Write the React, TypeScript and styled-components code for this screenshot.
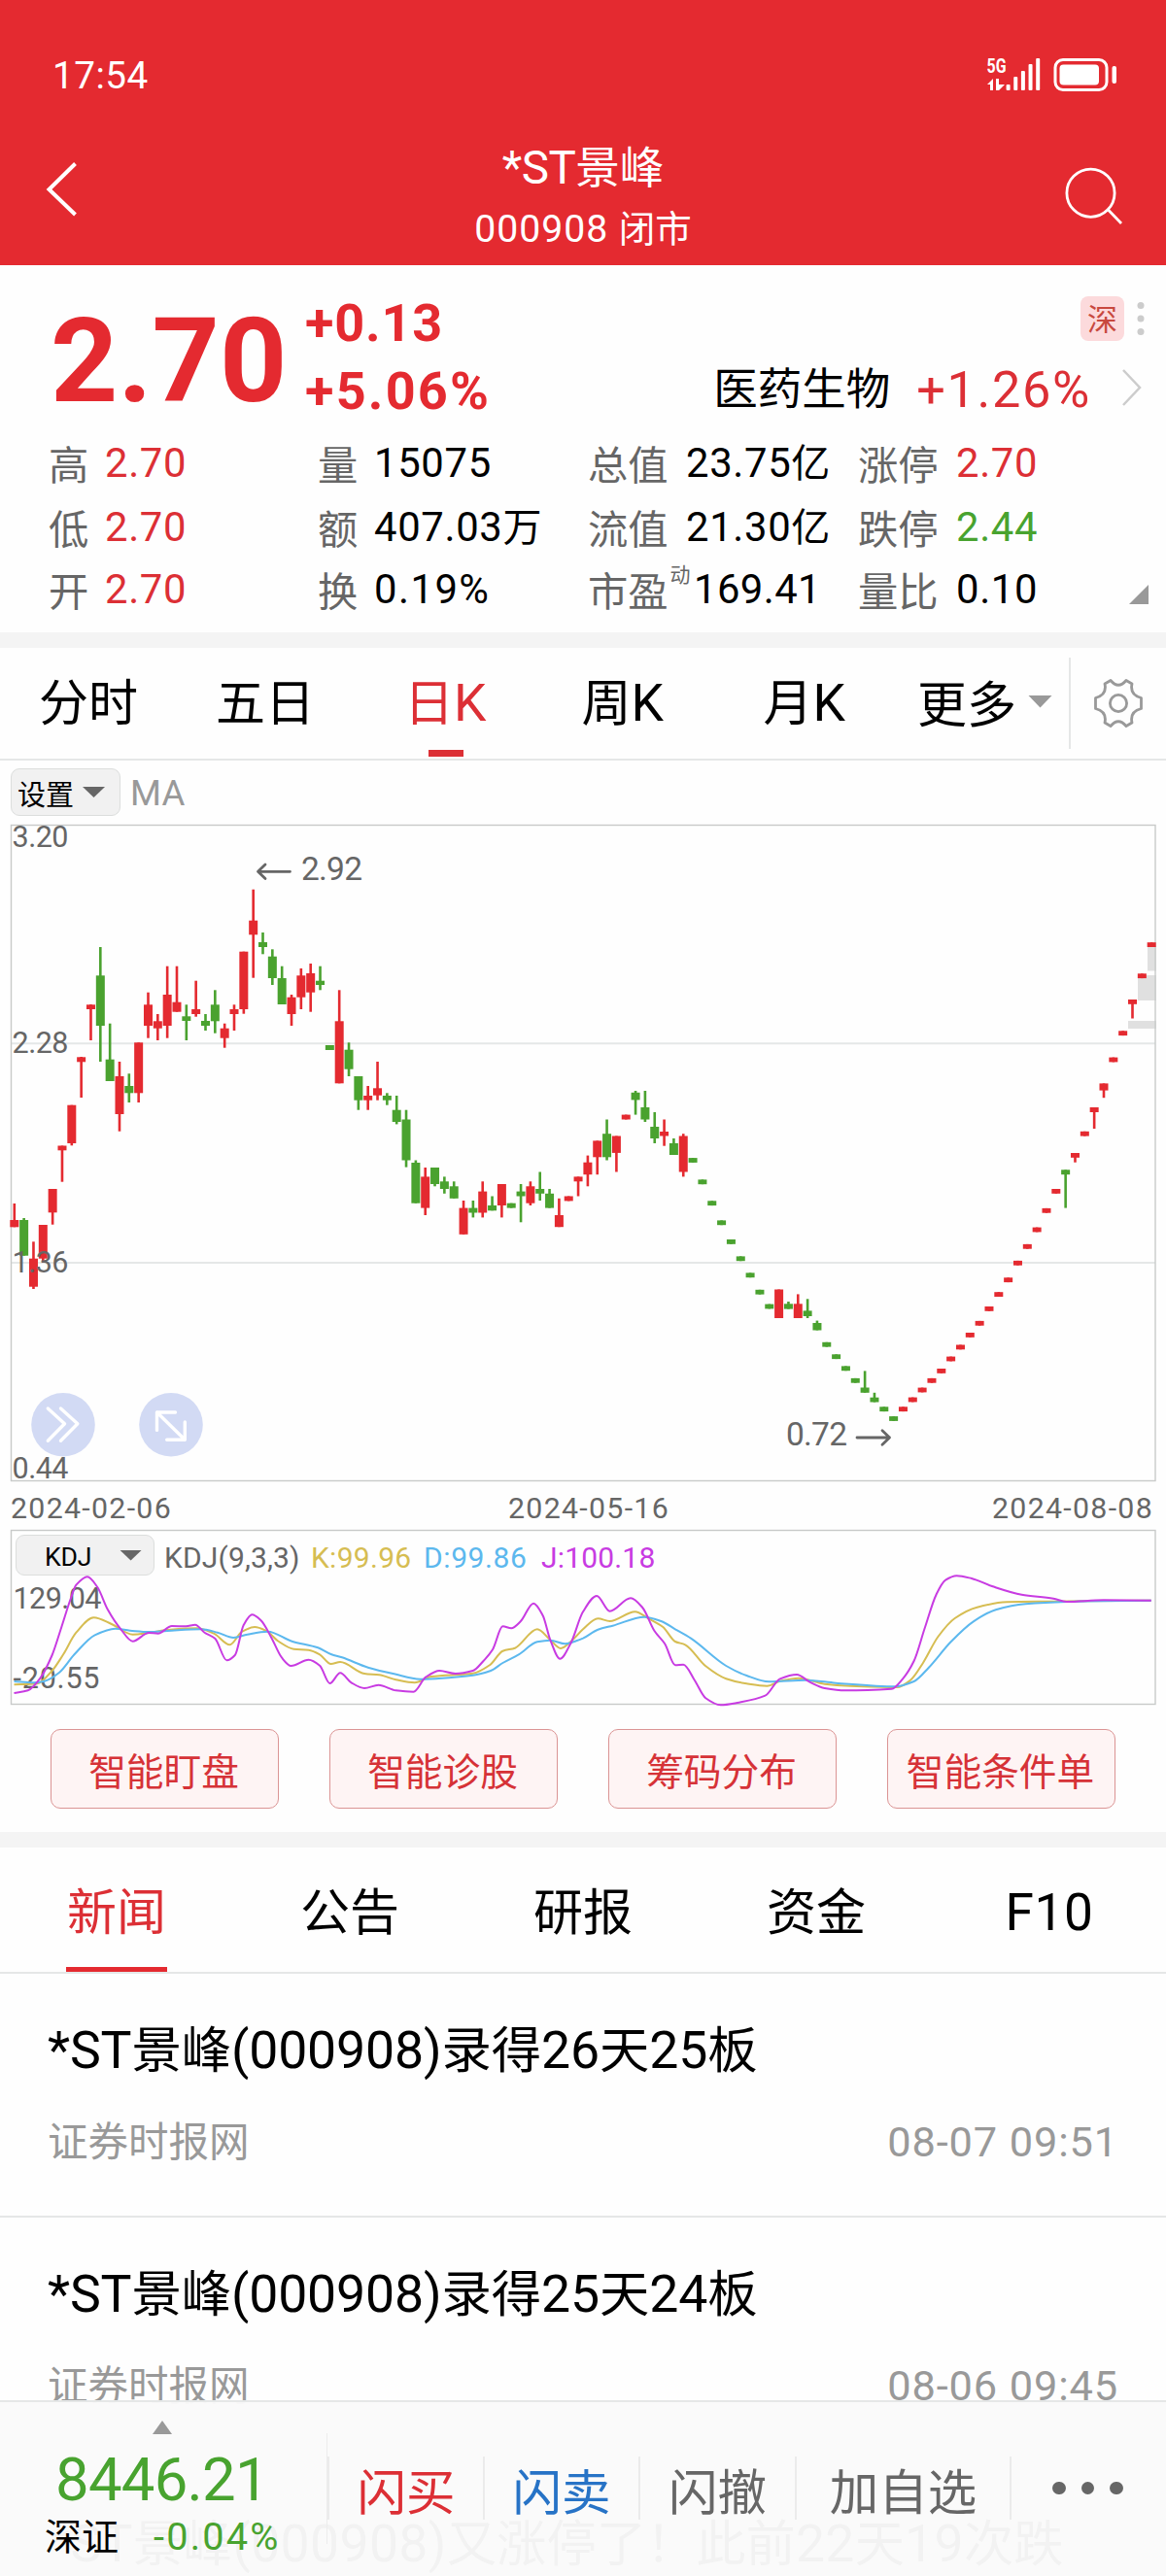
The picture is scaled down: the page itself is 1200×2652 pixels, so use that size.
import React from 'react';
import styled, { createGlobalStyle, css } from 'styled-components';

const RED = '#e42a30';
const TEXT_RED = '#dc2f35';
const GREEN = '#48a32f';
const GREY = '#666666';
const LINE = '#e5e7e7';

const GlobalStyle = createGlobalStyle`
  * { box-sizing: border-box; }
  html, body { margin: 0; padding: 0; background: #fefefe; }
  body { font-family: 'Noto Sans CJK SC', sans-serif; color: #000; }
`;

/* ---------- text ---------- */

const Latin = styled.span<{ $track: number }>`
  font-family: Roboto, 'Noto Sans CJK SC', sans-serif;
  font-size: 1.045em;
  line-height: 0;
  letter-spacing: ${(p) => p.$track}em;
`;

/* Digits and latin letters are set in a slightly larger face than the hanzi. */
function Txt({ children, track = 0.01 }: { children: string; track?: number }) {
  const runs = children.match(/[\x20-\x7e]+|[^\x20-\x7e]+/g) ?? [];
  return (
    <>
      {runs.map((r, i) =>
        /[\x20-\x7e]/.test(r) ? (
          <Latin key={i} $track={track}>
            {r}
          </Latin>
        ) : (
          <React.Fragment key={i}>{r}</React.Fragment>
        ),
      )}
    </>
  );
}

/* ---------- page ---------- */

const Page = styled.main`
  position: relative;
  width: 1200px;
  height: 2652px;
  overflow: hidden;
  display: flex;
  flex-direction: column;
  background: #fefefe;
`;

const Divider = styled.div`
  height: 16px;
  flex: none;
  background: #f4f4f4;
`;

const Triangle = styled.i<{ $w: number; $h: number; $color: string; $up?: boolean }>`
  display: block;
  flex: none;
  width: ${(p) => p.$w}px;
  height: ${(p) => p.$h}px;
  background: ${(p) => p.$color};
  clip-path: ${(p) => (p.$up ? 'polygon(50% 0, 100% 100%, 0 100%)' : 'polygon(0 0, 100% 0, 50% 100%)')};
`;

/* ---------- header ---------- */

const Header = styled.header`
  flex: none;
  height: 273px;
  background: ${RED};
  color: #fff;
`;

const StatusBar = styled.div`
  height: 143px;
  padding: 11px 49px 0 54px;
  display: flex;
  align-items: center;
  justify-content: space-between;
  font-size: 37px;
  line-height: 50px;
`;

const Clock = styled.span`
  margin-top: -5px;
`;

const StatusSvg = styled.svg`
  overflow: visible;
`;

const NavBar = styled.div`
  height: 130px;
  padding: 0 43px 0 46px;
  display: flex;
  justify-content: space-between;
  align-items: flex-start;
`;

const NavIcon = styled.svg`
  flex: none;
  width: 70px;
  height: 66px;
  margin-top: 22px;
`;

const TitleBlock = styled.div`
  display: flex;
  flex-direction: column;
  align-items: center;
  padding-right: 3px;
`;

const StockName = styled.h1`
  margin: 0;
  font-size: 45.5px;
  font-weight: 400;
  line-height: 52px;
`;

const StockCode = styled.div`
  margin-top: 11px;
  font-size: 37.5px;
  line-height: 54px;
`;

function StatusIcons() {
  const bars = [87, 79, 73, 66, 60];
  return (
    <StatusSvg width="136" height="36" viewBox="1015 59 136 36" fill="#fff">
      <text x="1015.5" y="75" fontFamily="Roboto" fontWeight="700" fontSize="21" textLength="20" lengthAdjust="spacingAndGlyphs">
        5G
      </text>
      <path d="M1016 87l6-6v12h-3v-6zM1025 81h3v6h6l-6 6h-3z" />
      {bars.map((y, i) => (
        <rect key={y} x={1035.6 + i * 7.65} y={y} width="4" height={93 - y} rx="1" />
      ))}
      <rect x="1086" y="61.5" width="53" height="31" rx="8" fill="none" stroke="#fff" strokeWidth="3" />
      <rect x="1090.5" y="66.5" width="40.5" height="21" rx="4" />
      <rect x="1144.5" y="68" width="4.5" height="18" rx="2" />
    </StatusSvg>
  );
}

/* ---------- quote ---------- */

const Quote = styled.section`
  flex: none;
  height: 378px;
  display: flex;
  flex-direction: column;
`;

const QuoteTop = styled.div`
  height: 168px;
  padding: 0 22px 0 52px;
  display: flex;
`;

const Price = styled.div`
  width: 262px;
  padding-top: 39px;
  font: 700 121px/120px Roboto, sans-serif;
  color: ${RED};
  white-space: nowrap;
`;

const Changes = styled.div`
  padding-top: 25px;
  display: flex;
  flex-direction: column;
  font: 700 54px/70px Roboto, sans-serif;
  color: ${RED};
`;

const Change = styled.span<{ $track: number }>`
  letter-spacing: ${(p) => p.$track}px;
`;

const QuoteSide = styled.div`
  margin-left: auto;
  padding-top: 32px;
  display: flex;
  flex-direction: column;
  align-items: flex-end;
`;

const Tags = styled.div`
  display: flex;
  align-items: center;
  gap: 13px;
`;

const Badge = styled.span`
  width: 45px;
  height: 46px;
  border-radius: 8px;
  background: #fcdadc;
  color: #c8493f;
  font-size: 31px;
  line-height: 44px;
  text-align: center;
`;

const Sector = styled.div`
  margin-top: 16px;
  display: flex;
  align-items: center;
  font-size: 45.5px;
  line-height: 60px;
`;

const SectorChange = styled.span`
  margin: 0 31px 0 27px;
  font-size: 50px;
  color: ${TEXT_RED};
`;

const Chevron = styled.svg`
  margin: 3px 2px 0 0;
`;

const Stats = styled.div`
  position: relative;
  padding-left: 50px;
  display: grid;
  grid-template-columns: 277px 278px 278px 1fr;
  grid-template-rows: 66px 66px 62px;
`;

const Stat = styled.div`
  display: flex;
  align-items: center;
  line-height: 60px;
  white-space: nowrap;
`;

const StatLabel = styled.span<{ $wide?: boolean }>`
  width: ${(p) => (p.$wide ? 101 : 58)}px;
  margin-top: 4px;
  display: flex;
  font-size: 41.3px;
  color: ${GREY};
`;

const Sup = styled.sup`
  margin: -13px 0 0 2px;
  font-size: 21px;
  line-height: 54px;
  vertical-align: baseline;
`;

const StatValue = styled.span<{ $color?: string; $shift?: number }>`
  margin-left: ${(p) => p.$shift ?? 0}px;
  margin-top: -1px;
  font-size: 40px;
  color: ${(p) => p.$color ?? '#000'};
`;

const Corner = styled.i`
  position: absolute;
  right: 18px;
  bottom: 13px;
  width: 20px;
  height: 20px;
  background: #999;
  clip-path: polygon(100% 0, 100% 100%, 0 100%);
`;

type StatItem = { label: string; value: string; color?: string; sup?: string; track?: number };
const stats: StatItem[] = [
  { label: '高', value: '2.70', color: TEXT_RED },
  { label: '量', value: '15075' },
  { label: '总值', value: '23.75亿' },
  { label: '涨停', value: '2.70', color: TEXT_RED },
  { label: '低', value: '2.70', color: TEXT_RED },
  { label: '额', value: '407.03万' },
  { label: '流值', value: '21.30亿' },
  { label: '跌停', value: '2.44', color: GREEN },
  { label: '开', value: '2.70', color: TEXT_RED },
  { label: '换', value: '0.19%', track: 0.035 },
  { label: '市盈', value: '169.41', sup: '动', track: 0.01 },
  { label: '量比', value: '0.10' },
];

/* ---------- period tabs ---------- */

const Periods = styled.nav`
  flex: none;
  height: 116px;
  border-bottom: 2px solid ${LINE};
  display: grid;
  grid-template-columns: 182px 182px 189px 176px 198px 173px 1fr;
  font-size: 51px;
`;

const Period = styled.button<{ $active?: boolean }>`
  all: unset;
  display: flex;
  flex-direction: column;
  align-items: center;
  line-height: 106px;
  color: ${(p) => (p.$active ? TEXT_RED : '#000')};
  ${(p) =>
    p.$active &&
    css`
      &::after {
        content: '';
        width: 36px;
        height: 7px;
        margin-top: -1px;
        background: ${TEXT_RED};
      }
    `}
`;

const MorePeriods = styled.div`
  height: 110px;
  padding-left: 17px;
  display: flex;
  align-items: center;
  gap: 12px;
  line-height: 102px;
`;

const GearCell = styled.div`
  height: 94px;
  margin-top: 10px;
  border-left: 2px solid ${LINE};
  display: flex;
  align-items: center;
  padding-left: 24px;
`;

/* ---------- chart ---------- */

const ChartPanel = styled.section`
  flex: none;
  height: 1103px;
  display: flex;
  flex-direction: column;
`;

const ChartBar = styled.div`
  height: 65px;
  padding: 8px 11px 0;
  display: flex;
  align-items: flex-start;
  gap: 10px;
`;

const DropButton = styled.button<{ $w: number; $h: number; $left: number; $gap: number; $size: number }>`
  all: unset;
  box-sizing: border-box;
  width: ${(p) => p.$w}px;
  height: ${(p) => p.$h}px;
  padding-left: ${(p) => p.$left}px;
  display: flex;
  align-items: center;
  gap: ${(p) => p.$gap}px;
  border: 1px solid #dcdedd;
  border-radius: 9px;
  background: #f1f1f1;
  font-size: ${(p) => p.$size}px;
  line-height: 38px;
`;

const Overlay = styled.span`
  font-size: 35px;
  line-height: 46px;
  color: #999;
`;

const Plot = styled.svg`
  display: block;
  flex: none;
  overflow: visible;
  font-family: Roboto, sans-serif;
`;

const Dates = styled.div`
  height: 46px;
  padding: 0 13px 0 11px;
  display: grid;
  grid-template-columns: 512px 1fr auto;
  font-size: 29px;
  line-height: 45px;
  color: ${GREY};
`;

const KdjBox = styled.div`
  height: 182px;
  flex: none;
  position: relative;
`;

const KdjBar = styled.div`
  position: absolute;
  left: 16px;
  top: 6px;
  display: flex;
  align-items: center;
`;

const KdjText = styled.span<{ $color: string; $w: number; $left?: number }>`
  width: ${(p) => p.$w}px;
  margin-left: ${(p) => p.$left ?? 0}px;
  font-size: 28.7px;
  line-height: 39px;
  color: ${(p) => p.$color};
  white-space: nowrap;
`;

const UP = '#e42a30';
const DOWN = '#4aa22f';

/* direction, high, body top, body bottom, low */
type Candle = [0 | 1, number, number, number, number];

const dashes = (dir: 0 | 1, mids: number[]): Candle[] =>
  mids.map((m) => [dir, m - 2.4, m - 2.4, m + 2.4, m + 2.4]);

const candles: Candle[] = [
  [1, 399, 416, 423.3, 423.3], [0, 414, 416, 452.7, 452.7], [1, 438.3, 455.7, 484.7, 487], [1, 421, 421, 455.7, 460],
  [1, 384, 384, 408.3, 420.7], [1, 339.5, 339.5, 344.3, 376.7], [1, 297.7, 297.7, 337, 339.3], [1, 248, 248.3, 253.3, 290],
  [1, 194, 194.3, 199, 231], [0, 135, 164.3, 216, 253], [0, 213.7, 250.7, 273, 273], [1, 253, 268, 307, 324.7],
  [0, 265.3, 278, 285.3, 295], [1, 233.3, 233.3, 285.3, 295], [1, 181.7, 194.3, 216, 228.7], [1, 204, 211.3, 218.7, 231],
  [1, 154.7, 184, 216, 228.7], [1, 154.7, 191.7, 201.7, 201.7], [0, 194.3, 206.3, 211, 231], [1, 169.7, 199, 204, 206.7],
  [0, 204, 211, 216, 221], [0, 179.3, 194.3, 211.3, 223.7], [1, 213.7, 218.7, 228.7, 238.7], [1, 194.3, 199, 204, 221],
  [1, 139.7, 139.7, 199, 203.7], [1, 75.7, 107.7, 122.3, 166.7], [0, 120, 130, 135, 142.3], [0, 137.3, 144.7, 167, 174],
  [0, 154.7, 167, 194, 194], [1, 184, 186.7, 204, 216], [1, 157, 164.3, 186.7, 199], [1, 152, 162, 181.7, 201.7],
  [0, 154.7, 169.7, 174, 179.3], [0, 236, 236, 241, 241], [1, 179.3, 211.3, 275.3, 275.3], [0, 233.3, 240.7, 260.7, 268],
  [0, 268, 268, 292.7, 302.7], [1, 278, 288, 292.7, 302.7], [1, 253, 280.3, 287.7, 292.7], [0, 285.3, 288, 292.7, 297.7],
  [0, 288, 302.7, 315, 317.4], [0, 302.7, 312.5, 354.5, 361.6], [0, 354.5, 357, 398.7, 398.7], [1, 362, 371.4, 403.6, 411],
  [0, 362, 362, 379, 381.3], [0, 371.4, 376.3, 384, 388.8], [0, 376.3, 381.3, 393.8, 393.8], [1, 396, 403.6, 430.8, 430.8],
  [0, 396, 403.6, 408.5, 413.4], [1, 376.3, 386.6, 408.5, 413.4], [0, 391.5, 401, 406.3, 406.3], [1, 379, 379, 401, 413.4],
  [0, 398.7, 398.7, 403.6, 403.6], [0, 379, 386.6, 391.5, 418.3], [1, 376.3, 381.3, 398.7, 401], [0, 366.5, 384, 388.8, 396],
  [0, 384, 388.8, 403.6, 403.6], [1, 393.8, 411, 423.2, 423.2], [1, 391.5, 391.5, 396.4, 396.4], [1, 371.4, 371.4, 376.3, 391.5],
  [1, 349.6, 356.7, 369.2, 381.3], [1, 334.4, 334.4, 351.3, 369.2], [0, 312.5, 327.2, 351.3, 354.5], [1, 329.5, 329.5, 346.9, 366.5],
  [1, 307.6, 307.6, 312.5, 312.5], [0, 283, 284.8, 292.4, 307.6], [0, 283, 300, 312.5, 315], [0, 305, 320, 332, 337],
  [1, 312.5, 325, 329.5, 339.7], [0, 332, 337, 349, 349], [1, 327.2, 329.5, 366.5, 371.4],
  ...dashes(0, [354.5, 376.8, 398.7, 418.8, 438.4, 455.8, 472.8, 490.2, 505]),
  [1, 487.5, 487.5, 517, 517], [0, 500, 502.3, 507.6, 507.6], [1, 492.4, 502.3, 517, 517], [0, 497.3, 509.4, 515, 517],
  [0, 519.6, 522, 529.5, 529.5],
  ...dashes(0, [544.2, 556.7, 568.8, 581.3]),
  [0, 571.4, 588.5, 593.8, 593.8], [0, 593.8, 598.7, 603.5, 603.5],
  ...dashes(0, [610.7, 620.5]),
  ...dashes(1, [610.7, 601, 591, 581.3, 571.4, 559, 546.9, 534.4, 522.3, 507.4, 492.6, 477.7, 460.3, 443.3, 426, 406.3, 386.4]),
  [0, 364.3, 364.3, 369.2, 403.6], [1, 347, 347, 351.8, 356.7],
  ...dashes(1, [327.2]),
  [1, 300, 300, 305, 322], [1, 275.4, 275.4, 282.6, 290.2],
  ...dashes(1, [251, 223.7]),
  [1, 189, 189, 193.8, 208.5],
  ...dashes(1, [164.7, 132.6]),
];

function CandlePlot() {
  return (
    <Plot width="1200" height="680" viewBox="0 8 1200 680">
      <g fill="none" stroke={LINE} strokeWidth="2">
        <path d="M11 234.3H1189M11 460H1189" />
      </g>
      <g fill="#e0e0e0">
        <rect x="1181" y="134" width="9" height="25.5" />
        <rect x="1171" y="164" width="19" height="26" />
        <rect x="1161" y="211" width="29" height="8" />
      </g>
      <rect x="11.5" y="9.5" width="1177.5" height="675" fill="none" stroke="#c8cac9" strokeWidth="1.4" />
      {candles.map(([dir, hi, top, bottom, lo], i) => {
        const x = 14.8 + i * 9.835;
        return (
          <g key={i} fill={dir ? UP : DOWN}>
            <rect x={x - 1.3} y={hi} width="2.6" height={lo - hi} />
            <rect x={x - 4.5} y={top} width="9" height={bottom - top} />
          </g>
        );
      })}
      <g fill={GREY} fontSize="30.5">
        <text x="12.5" y="32" textLength="58">3.20</text>
        <text x="12.5" y="244" textLength="58">2.28</text>
        <text x="12.5" y="470" textLength="58">1.36</text>
      </g>
      <g fill={GREY} fontSize="33.5">
        <text x="310" y="65.5" textLength="63">2.92</text>
        <text x="809" y="647.5" textLength="63">0.72</text>
      </g>
      <g fill="none" stroke={GREY} strokeWidth="2.8" strokeLinecap="round" strokeLinejoin="round">
        <path d="M298.5 57.3H265.5M273 50L265.5 57.3L273 64.6" />
        <path d="M882 640H915.5M908 632.7L915.5 640L908 647.3" />
      </g>
      <g fill="#d2daf4">
        <circle cx="65" cy="626.8" r="32.8" />
        <circle cx="176" cy="626.8" r="32.8" />
      </g>
      <g fill="none" stroke="#fff" strokeWidth="3.4" strokeLinecap="round" strokeLinejoin="round">
        <path d="M49.3 610L66.5 625.8L49.3 643.3M62.5 610L79.8 625.8L62.5 643.3" />
        <path d="M180.5 614H161.5V632.4M161.5 614L190.3 642.3M190.3 624V642.3H171.7" />
      </g>
      <text x="12.5" y="682" fill={GREY} fontSize="30.5" textLength="58">0.44</text>
    </Plot>
  );
}

/* Indicator curves, traced on a grid of 2.613 × 3 units per pixel. */
type Pt = [number, number];
const S = 1568;
const curveJ: Pt[] = [
  [38, 549], [75, 541], [110, 500], [140, 432], [165, 347], [190, 258], [205, 215], [235, 190], [262, 222], [290, 292],
  [325, 352], [357, 389], [400, 363], [425, 365], [462, 342], [500, 343], [525, 338], [550, 362], [578, 380], [610, 448],
  [632, 432], [655, 340], [678, 307], [702, 325], [730, 378], [758, 440], [783, 465], [830, 446], [860, 464], [887, 519],
  [915, 487], [945, 517], [980, 534], [1018, 524], [1065, 541], [1112, 545], [1145, 500], [1182, 480], [1225, 489],
  [1272, 480], [1300, 450], [1325, 415], [1352, 343], [1375, 349], [1400, 328], [1435, 272], [1460, 310], [1480, 385],
  [1506, 443], [1535, 395], [1568, 298], [S + 37, 249], [S + 72, 296], [S + 128, 256], [S + 160, 285], [S + 192, 357],
  [S + 220, 397], [S + 248, 463], [S + 270, 461], [S + 300, 509], [S + 330, 565], [S + 370, 586], [S + 420, 578],
  [S + 490, 557], [S + 530, 505], [S + 575, 492], [S + 610, 515], [S + 650, 534], [S + 705, 541], [S + 830, 536],
  [S + 860, 505], [S + 890, 450], [S + 920, 345], [S + 950, 245], [S + 975, 200], [S + 1005, 187], [S + 1045, 195],
  [S + 1100, 219], [S + 1180, 245], [S + 1265, 257], [S + 1300, 267], [S + 1400, 262], [S + 1528, 263],
];
const curveK: Pt[] = [
  [38, 523], [100, 520], [140, 480], [170, 430], [205, 362], [252, 316], [300, 336], [357, 368], [400, 363], [450, 354],
  [530, 349], [575, 365], [618, 400], [650, 360], [685, 345], [715, 356], [750, 390], [790, 413], [830, 416], [860, 430],
  [890, 459], [915, 453], [980, 489], [1020, 493], [1065, 508], [1115, 517], [1160, 498], [1272, 488], [1318, 462],
  [1352, 419], [1385, 410], [1445, 352], [1480, 385], [1508, 411], [1540, 385], [1568, 352], [S + 40, 319], [S + 72, 327],
  [S + 140, 298], [S + 175, 318], [S + 215, 345], [S + 248, 390], [S + 275, 400], [S + 330, 466], [S + 385, 505],
  [S + 440, 520], [S + 495, 527], [S + 530, 512], [S + 580, 503], [S + 650, 521], [S + 720, 527], [S + 845, 531],
  [S + 880, 510], [S + 915, 455], [S + 955, 375], [S + 1000, 318], [S + 1060, 284], [S + 1140, 268], [S + 1265, 266],
  [S + 1350, 265], [S + 1528, 263],
];
const curveD: Pt[] = [
  [38, 513], [90, 517], [120, 512], [160, 485], [200, 430], [255, 370], [310, 350], [350, 356], [400, 360], [450, 357],
  [540, 352], [585, 362], [628, 378], [665, 368], [720, 359], [785, 389], [855, 409], [890, 429], [920, 439], [990, 470],
  [1060, 490], [1130, 506], [1272, 494], [1320, 480], [1352, 456], [1395, 430], [1445, 391], [1480, 386], [1520, 397],
  [1550, 388], [1568, 380], [S + 40, 353], [S + 80, 341], [S + 165, 314], [S + 210, 327], [S + 248, 352], [S + 290, 380],
  [S + 385, 465], [S + 440, 495], [S + 500, 514], [S + 600, 509], [S + 680, 518], [S + 840, 529], [S + 890, 513],
  [S + 930, 470], [S + 990, 390], [S + 1050, 328], [S + 1110, 292], [S + 1190, 274], [S + 1300, 267], [S + 1400, 265],
  [S + 1528, 263],
];

/* Monotone cubic through the points, so that flat stretches do not overshoot. */
function smooth(raw: Pt[]): string {
  const p = raw.map(([x, y]) => [x / 2.6133, y / 3] as Pt);
  const n = p.length;
  const slope = (i: number) => (p[i + 1][1] - p[i][1]) / (p[i + 1][0] - p[i][0]);
  const m = p.map((_, i) => {
    if (i === 0) return slope(0);
    if (i === n - 1) return slope(n - 2);
    const a = slope(i - 1);
    const b = slope(i);
    return a * b <= 0 ? 0 : (2 * a * b) / (a + b);
  });
  let d = `M${p[0][0].toFixed(1)} ${p[0][1].toFixed(1)}`;
  for (let i = 0; i < n - 1; i++) {
    const h = (p[i + 1][0] - p[i][0]) / 3;
    d += `C${(p[i][0] + h).toFixed(1)} ${(p[i][1] + m[i] * h).toFixed(1)} ${(p[i + 1][0] - h).toFixed(1)} ${(
      p[i + 1][1] - m[i + 1] * h
    ).toFixed(1)} ${p[i + 1][0].toFixed(1)} ${p[i + 1][1].toFixed(1)}`;
  }
  return d;
}

function KdjPlot() {
  return (
    <Plot width="1200" height="182" viewBox="0 14 1200 182">
      <rect x="11.5" y="15.5" width="1177.5" height="179" fill="none" stroke="#c8cac9" strokeWidth="1.4" />
      <g fill={GREY} fontSize="30.5">
        <text x="13.5" y="96" textLength="91">129.04</text>
        <text x="13.5" y="178" textLength="89">-20.55</text>
      </g>
      <g fill="none" strokeWidth="2">
        <path d={smooth(curveK)} stroke="#d6bd52" />
        <path d={smooth(curveD)} stroke="#5cb8ee" />
        <path d={smooth(curveJ)} stroke="#c83be2" />
      </g>
    </Plot>
  );
}

const Tools = styled.div`
  height: 130px;
  padding: 24px 52px 0;
  display: grid;
  grid-template-columns: repeat(4, 1fr);
  gap: 52px;
`;

const Tool = styled.button`
  all: unset;
  box-sizing: border-box;
  height: 82px;
  padding-right: 2px;
  border: 1.5px solid #db9494;
  border-radius: 10px;
  background: #fef4f4;
  color: #d63237;
  font-size: 38.7px;
  line-height: 73px;
  text-align: center;
  white-space: nowrap;
`;

/* ---------- news ---------- */

const NewsTabs = styled.nav`
  flex: none;
  height: 130px;
  border-bottom: 2px solid ${LINE};
  display: grid;
  grid-template-columns: repeat(5, 1fr);
  font-size: 51px;
`;

const NewsTab = styled.button<{ $active?: boolean }>`
  all: unset;
  justify-self: center;
  padding: 4px 1px 1px;
  border-bottom: 5px solid ${(p) => (p.$active ? RED : 'transparent')};
  color: ${(p) => (p.$active ? TEXT_RED : '#000')};
  line-height: 118px;
`;

const NewsItem = styled.article<{ $top?: number }>`
  flex: none;
  height: 251px;
  padding: ${(p) => p.$top ?? 38}px 49px 0;
  border-bottom: 2px solid ${LINE};
`;

const NewsTitle = styled.h2`
  margin: 0;
  font-size: 51.3px;
  font-weight: 400;
  line-height: 74px;
  white-space: nowrap;
`;

const NewsMeta = styled.div`
  margin-top: 28px;
  display: flex;
  justify-content: space-between;
  font-size: 41.5px;
  line-height: 60px;
  color: #999;
`;

const news = [
  { title: '*ST景峰(000908)录得26天25板', time: '08-07 09:51' },
  { title: '*ST景峰(000908)录得25天24板', time: '08-06 09:45' },
];

/* ---------- footer ---------- */

const Footer = styled.footer`
  position: absolute;
  left: 0;
  right: 0;
  bottom: 0;
  height: 181px;
  border-top: 2px solid ${LINE};
  background: rgba(250, 250, 250, 0.97);
  display: flex;
`;

const IndexCell = styled.div`
  width: 336px;
  padding: 19px 0 0 46px;
`;

const IndexValue = styled.div`
  margin-top: 9px;
  padding-left: 11px;
  font-size: 59px;
  line-height: 68px;
  color: ${GREEN};
`;

const IndexLine = styled.div`
  display: flex;
  align-items: center;
  gap: 36px;
  font-size: 38px;
  line-height: 52px;
`;

const IndexChange = styled.span`
  color: ${GREEN};
`;

const ArrowRow = styled.div`
  padding-left: 111px;
`;

const Rule = styled.i`
  width: 1px;
  height: 114px;
  margin-top: 32px;
  background: #ececec;
`;

const Action = styled.button<{ $w: number; $color?: string }>`
  all: unset;
  box-sizing: border-box;
  width: ${(p) => p.$w}px;
  height: 65px;
  margin-top: 56px;
  border-left: 2px solid #ebebeb;
  font-size: 50.5px;
  line-height: 56px;
  text-align: center;
  color: ${(p) => p.$color ?? GREY};
`;

const Dots = styled.div`
  height: 65px;
  margin-top: 56px;
  padding-left: 42px;
  border-left: 2px solid #ebebeb;
  display: flex;
  align-items: center;
  gap: 16px;
`;

const Dot = styled.i`
  width: 13.5px;
  height: 13.5px;
  border-radius: 50%;
  background: ${GREY};
`;

export default function App() {
  return (
    <Page>
      <GlobalStyle />
      <Header>
        <StatusBar>
          <Clock>
            <Txt track={0.012}>17:54</Txt>
          </Clock>
          <StatusIcons />
        </StatusBar>
        <NavBar>
          <NavIcon viewBox="46 165 70 66" fill="none" stroke="#fff" strokeWidth="4">
            <path d="M77.5 168.5L50.5 195L77.5 221" />
          </NavIcon>
          <TitleBlock>
            <StockName>
              <Txt track={-0.01}>*ST景峰</Txt>
            </StockName>
            <StockCode>
              <Txt track={0.025}>000908 闭市</Txt>
            </StockCode>
          </TitleBlock>
          <NavIcon viewBox="1087 165 70 66" fill="none" stroke="#fff" strokeWidth="2.8">
            <circle cx="1122.5" cy="198.7" r="24.6" />
            <path d="M1140.5 216L1154 230" />
          </NavIcon>
        </NavBar>
      </Header>

      <Quote>
        <QuoteTop>
          <Price>2.70</Price>
          <Changes>
            <Change $track={0.8}>+0.13</Change>
            <Change $track={2.2}>+5.06%</Change>
          </Changes>
          <QuoteSide>
            <Tags>
              <Badge>深</Badge>
              <svg width="8" height="36" fill="#ccc">
                <circle cx="4" cy="4.5" r="3.5" />
                <circle cx="4" cy="18" r="3.5" />
                <circle cx="4" cy="31.5" r="3.5" />
              </svg>
            </Tags>
            <Sector>
              医药生物
              <SectorChange>
                <Txt track={0.032}>+1.26%</Txt>
              </SectorChange>
              <Chevron width="22" height="38" fill="none" stroke="#ccc" strokeWidth="2.5">
                <path d="M2 1L19 19L2 37" />
              </Chevron>
            </Sector>
          </QuoteSide>
        </QuoteTop>
        <Stats>
          {stats.map((s) => (
            <Stat key={s.label}>
              <StatLabel $wide={s.label.length > 1}>
                {s.label}
                {s.sup && <Sup>{s.sup}</Sup>}
              </StatLabel>
              <StatValue $color={s.color} $shift={s.sup ? 8 : 0}>
                <Txt track={s.track ?? 0.016}>{s.value}</Txt>
              </StatValue>
            </Stat>
          ))}
          <Corner />
        </Stats>
      </Quote>

      <Divider />

      <Periods>
        <Period>分时</Period>
        <Period>五日</Period>
        <Period $active>
          <span>
            <Txt>日K</Txt>
          </span>
        </Period>
        <Period>
          <span>
            <Txt>周K</Txt>
          </span>
        </Period>
        <Period>
          <span>
            <Txt>月K</Txt>
          </span>
        </Period>
        <MorePeriods>
          更多
          <Triangle $w={25} $h={13} $color="#999" />
        </MorePeriods>
        <GearCell>
          <svg width="50" height="50" viewBox="-25 -25 50 50" fill="none" stroke="#999" strokeWidth="2.8" strokeLinejoin="round">
            <path d="M-8 -23.5Q0 -14 8 -23.5L14 -20Q11.5 -8.5 23.5 -5.5L23.5 5.5Q11.5 8.5 14 20L8 23.5Q0 14 -8 23.5L-14 20Q-11.5 8.5 -23.5 5.5L-23.5 -5.5Q-11.5 -8.5 -14 -20Z" />
            <circle r="8.6" />
          </svg>
        </GearCell>
      </Periods>

      <ChartPanel>
        <ChartBar>
          <DropButton $w={113} $h={49} $left={6} $gap={9} $size={29}>
            设置
            <Triangle $w={23} $h={11} $color={GREY} />
          </DropButton>
          <Overlay>
            <Txt>MA</Txt>
          </Overlay>
        </ChartBar>
        <CandlePlot />
        <Dates>
          <span>
            <Txt track={0.043}>2024-02-06</Txt>
          </span>
          <span>
            <Txt track={0.043}>2024-05-16</Txt>
          </span>
          <span>
            <Txt track={0.043}>2024-08-08</Txt>
          </span>
        </Dates>
        <KdjBox>
          <KdjPlot />
          <KdjBar>
            <DropButton $w={143} $h={42} $left={29} $gap={29} $size={25.5}>
              <span>
                <Txt track={-0.01}>KDJ</Txt>
              </span>
              <Triangle $w={23} $h={11} $color={GREY} />
            </DropButton>
            <KdjText $color={GREY} $w={151} $left={10}>
              <Txt track={0.005}>KDJ(9,3,3)</Txt>
            </KdjText>
            <KdjText $color="#d6bd52" $w={116}>
              <Txt>K:99.96</Txt>
            </KdjText>
            <KdjText $color="#5cb8ee" $w={121}>
              <Txt track={0.02}>D:99.86</Txt>
            </KdjText>
            <KdjText $color="#c83be2" $w={120}>
              <Txt track={0.006}>J:100.18</Txt>
            </KdjText>
          </KdjBar>
        </KdjBox>
        <Tools>
          <Tool>智能盯盘</Tool>
          <Tool>智能诊股</Tool>
          <Tool>筹码分布</Tool>
          <Tool>智能条件单</Tool>
        </Tools>
      </ChartPanel>

      <Divider />

      <NewsTabs>
        <NewsTab $active>新闻</NewsTab>
        <NewsTab>公告</NewsTab>
        <NewsTab>研报</NewsTab>
        <NewsTab>资金</NewsTab>
        <NewsTab>
          <Txt>F10</Txt>
        </NewsTab>
      </NewsTabs>

      {news.map((n) => (
        <NewsItem key={n.time}>
          <NewsTitle>
            <Txt track={-0.003}>{n.title}</Txt>
          </NewsTitle>
          <NewsMeta>
            <span>证券时报网</span>
            <span>
              <Txt track={0.02}>{n.time}</Txt>
            </span>
          </NewsMeta>
        </NewsItem>
      ))}
      <NewsItem $top={44}>
        <NewsTitle>
          <Txt track={0.006}>*ST景峰(000908)又涨停了！此前22天19次跌</Txt>
        </NewsTitle>
      </NewsItem>

      <Footer>
        <IndexCell>
          <ArrowRow>
            <Triangle $w={20} $h={14} $color="#999" $up />
          </ArrowRow>
          <IndexValue>
            <Txt track={-0.012}>8446.21</Txt>
          </IndexValue>
          <IndexLine>
            深证
            <IndexChange>
              <Txt track={0.055}>-0.04%</Txt>
            </IndexChange>
          </IndexLine>
        </IndexCell>
        <Rule />
        <Action $w={160} $color={TEXT_RED}>闪买</Action>
        <Action $w={160} $color="#2773c6">闪卖</Action>
        <Action $w={161}>闪撤</Action>
        <Action $w={221}>加自选</Action>
        <Dots>
          <Dot />
          <Dot />
          <Dot />
        </Dots>
      </Footer>
    </Page>
  );
}
